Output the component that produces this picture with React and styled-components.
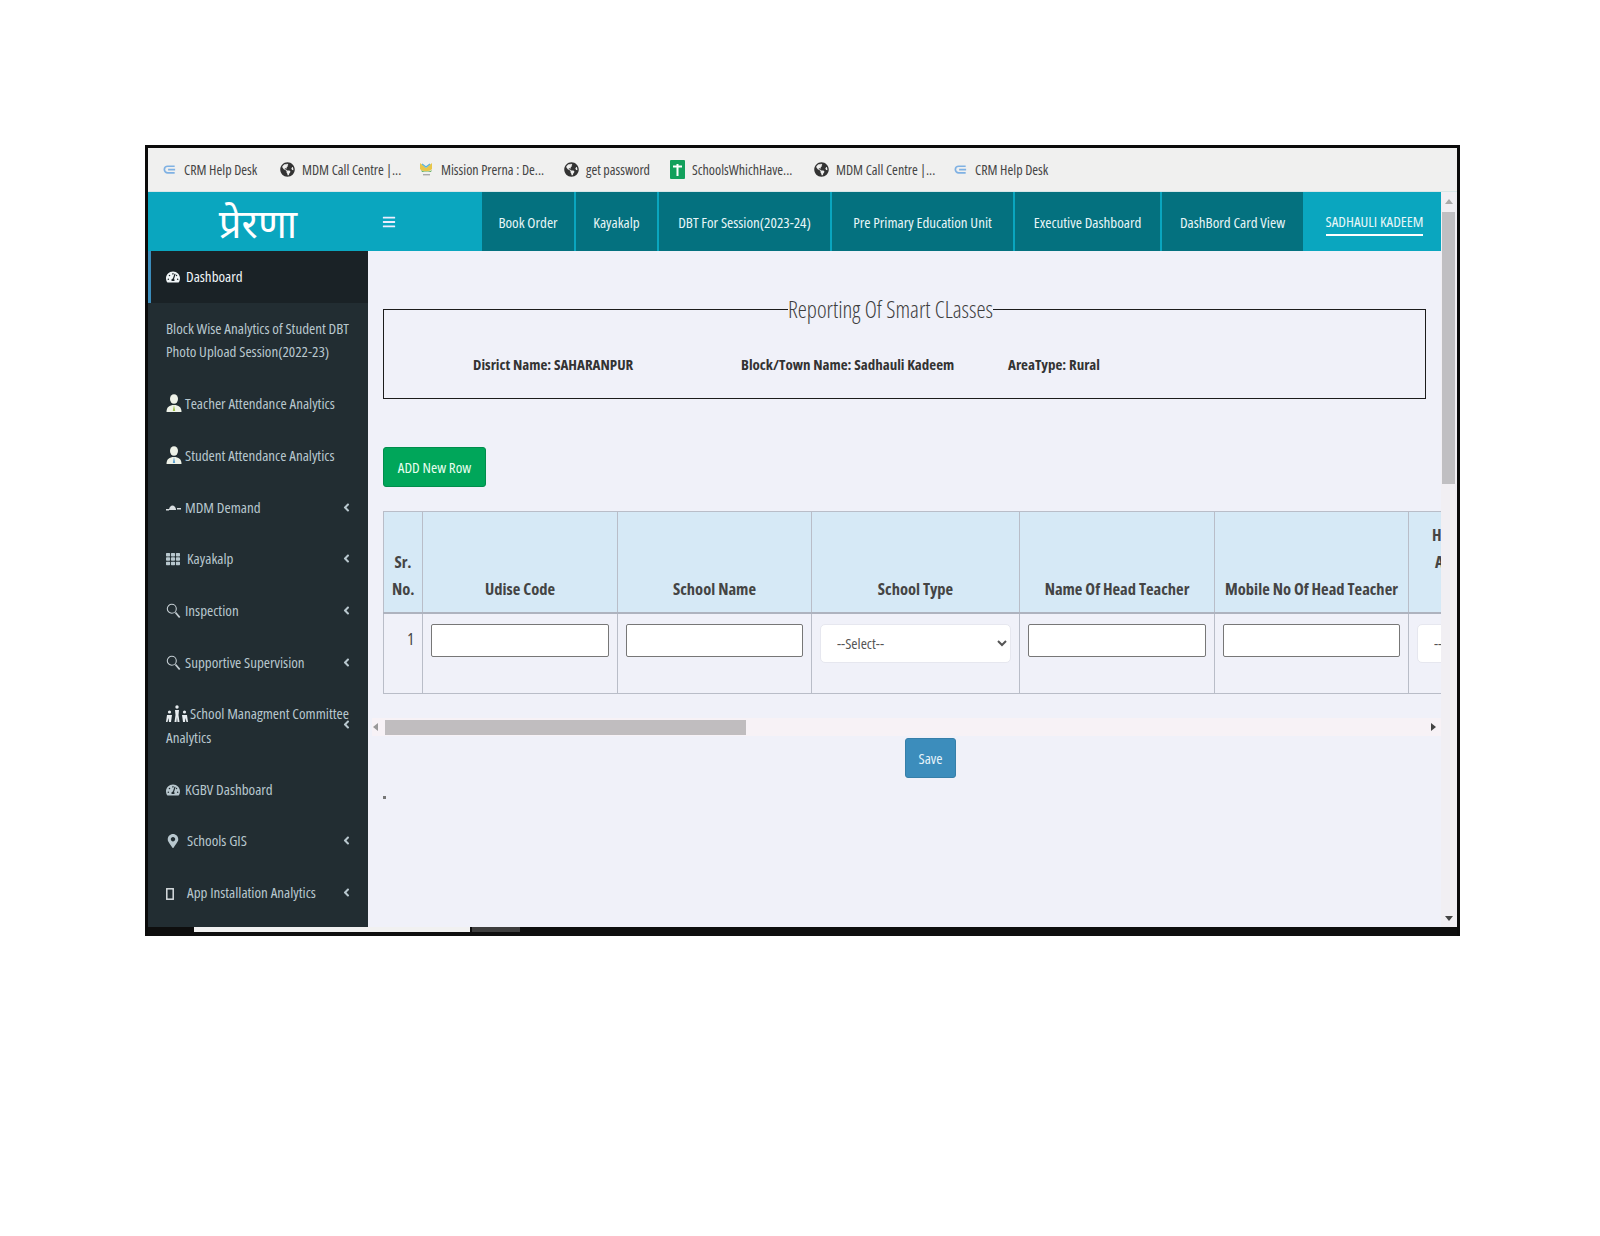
import React from "react";
import styled, { createGlobalStyle } from "styled-components";
import { FaAngleLeft, FaBars, FaGlobeAmericas, FaMapMarkerAlt, FaTachometerAlt, FaTh } from "react-icons/fa";

const Global = createGlobalStyle`
  html, body { margin: 0; padding: 0; background: #fff; }
  * { box-sizing: border-box; }
  body { font-family: "Open Sans", "Liberation Sans", sans-serif; font-stretch: 82%; }
  button, select, input { font-family: inherit; font-stretch: inherit; }
`;

const Frame = styled.div`
  margin: 145px 0 0 145px; width: 1315px; height: 791px; border: 3px solid #0b0b0b; border-bottom: 0;
  display: flex; flex-direction: column; overflow: hidden; background: #f0f1f9;
`;
const Bookmarks = styled.div`
  height: 44px; flex: none; display: flex; align-items: center; padding-left: 14px; gap: 16px;
  background: #f0f0ef; border-bottom: 1px solid #d8e6e8; font-size: 14px; font-stretch: 78%; color: #444;
`;
const Bookmark = styled.div`
  display: flex; align-items: center; gap: 7px; width: ${p => p.$w}px; white-space: nowrap; flex: none;
  svg { flex: none; }
`;
const Page = styled.div`flex: 1; min-height: 0; display: flex;`;
const App_ = styled.div`width: 1293px; flex: none; display: flex; flex-direction: column; min-height: 0;`;
const Header = styled.header`height: 59px; flex: none; display: flex; background: #0aa6bf; color: #fff;`;
const Logo = styled.div`
  width: 220px; flex: none; display: flex; align-items: center; justify-content: center; font-size: 40px;
  font-family: "Noto Sans", "Liberation Serif", serif; line-height: 1; color: #fff; padding-top: 2px;
`;
const Burger = styled.div`width: 114px; flex: none; display: flex; align-items: center; padding-left: 14px; font-size: 14px; color: #eef;`;
const Nav = styled.nav`flex: 1; display: flex; gap: 2px;`;
const NavItem = styled.a`
  width: ${p => p.$w}px; flex: none; display: flex; align-items: center; justify-content: center;
  background: ${p => (p.$active ? "#0aa6bf" : "#04717f")}; font-size: 15px; white-space: nowrap; color: #e8f6f8;
`;
const Under = styled.span`border-bottom: 2px solid #fff; padding: 2px 0 3px; margin-top: 2px;`;
const Body = styled.div`flex: 1; min-height: 0; display: flex;`;
const Side = styled.aside`width: 220px; flex: none; background: #222d32; color: #b8c7ce; overflow: hidden; font-size: 15px;`;
const Row = styled.div`
  position: relative; padding: 14px ${p => (p.$tight ? 4 : 18)}px 14px 18px; line-height: 23.7px; min-height: 51.7px;
  ${p => p.$active ? "background:#1a2226;border-left:3px solid #3c8dbc;padding-left:15px;color:#f0f5f7;" : ""}
`;
const Ico = styled.span`display: inline-flex; width: ${p => p.$w || 19}px; vertical-align: ${p => p.$v ?? -2}px; font-size: 14px;`;
const Chev = styled.span`position: absolute; right: 15px; top: ${p => p.$top || 19}px; font-size: 13px; line-height: 1; color: #b8c7ce;`;
const Main = styled.main`flex: 1; min-width: 0; overflow: hidden; padding-top: 47px; position: relative;`;
const Field = styled.fieldset`
  margin: 0 15px; padding: 0 0 0 89px; height: 101px; border: 1px solid #1c1c1c; min-width: 0; display: block;
`;
const Legend = styled.legend`
  margin-left: 315px; padding: 0; font-size: 23px; line-height: 1; color: #3d3d3d; font-weight: 300; font-stretch: 78%;
`;
const Info = styled.div`display: flex; margin-top: 33px; font-size: 15px; color: #333; font-weight: 700; font-stretch: 78%;`;
const InfoItem = styled.div`width: ${p => p.$w}px; flex: none; white-space: nowrap;`;
const AddBtn = styled.button`
  display: block; margin: 48px 0 24px 15px; width: 103px; height: 40px; border: 1px solid #008d4c; border-radius: 3px; background: #00a65a;
  color: #e8fff0; font-size: 15px; padding: 0;
`;
const TableWrap = styled.div`margin-left: 15px; overflow: hidden;`;
const Table = styled.table`border-collapse: collapse; table-layout: fixed; width: 1250px; border: 1px solid #b9bdc8; border-right: 0;`;
const Th = styled.th`
  width: ${p => p.$w}px; height: 101px; background: #d6e9f6; border: 1px solid #b9bdc8; border-bottom: 2px solid #aeb3bf;
  font-size: 16.5px; line-height: 27px; color: #444; vertical-align: bottom; padding: 0 8px 10px; text-align: center; font-stretch: 78%;
`;
const ThClip = styled.span`display: block; text-align: left; padding-left: ${p => p.$pad}px; height: 27px;`;
const Td = styled.td`height: 81px; border: 1px solid #b9bdc8; padding: 10px 8px 0; vertical-align: top; background: #f0f1f9;`;
const NumCell = styled(Td)`text-align: right; font-size: 16px; color: #444; padding-top: 14px;`;
const Inp = styled.input`
  display: block; width: 100%; height: 33px; border: 1px solid #777; border-radius: 2px; background: #fff; padding: 0;
`;
const Sel = styled.select`
  display: block; width: 100%; height: 39px; border: 1px solid #e6e7ef; border-radius: 5px; background: #fff; color: #555;
  font-size: 15px; padding-left: 12px;
`;
const HBar = styled.div`margin: 24px 0 0 4px; height: 18px; background: #f7f2f6; display: flex; align-items: center; position: relative; padding-left: 13px;`;
const HThumb = styled.div`width: 361px; height: 15px; background: #c0bdbf;`;
const HArrow = styled.span`
  position: absolute; top: 5px; ${p => p.$right ? "right: 5px; border-left: 5px solid #444;" : "left: 1px; border-right: 5px solid #999;"}
  border-top: 4px solid transparent; border-bottom: 4px solid transparent; width: 0; height: 0;
`;
const SaveRow = styled.div`padding: 2px 0 0 537px;`;
const SaveBtn = styled.button`
  width: 51px; height: 40px; background: #3c8dbc; border: 1px solid #367fa9; border-radius: 3px; color: #e6f3fa; font-size: 15px; padding: 0;
`;
const Speck = styled.div`width: 3px; height: 3px; margin: 18px 0 0 15px; background: #777;`;
const VBar = styled.div`flex: 1; background: #f1eff3; position: relative; padding-top: 20px;`;
const VThumb = styled.div`width: 13px; margin-left: 1px; height: 272px; background: #c0bfc2;`;
const VArrow = styled.span`
  position: absolute; left: 4px; ${p => p.$down ? "bottom: 6px; border-top: 5px solid #444;" : "top: 7px; border-bottom: 5px solid #aaa;"}
  border-left: 4px solid transparent; border-right: 4px solid transparent; width: 0; height: 0;
`;
const Bottom = styled.div`height: 9px; flex: none; background: #0e0e0e; display: flex; padding-left: 46px; align-items: flex-start;`;
const BottomWhite = styled.div`width: 276px; height: 5px; background: #f1f1f1;`;
const BottomGrey = styled.div`width: 48px; height: 5px; margin-left: 2px; background: #3e3e3e;`;

const CrmIcon = () => (
  <svg width="15" height="15" viewBox="0 0 16 16" fill="none" stroke="#7fb1e3" strokeWidth="1.8">
    <path d="M13.5 4.5H6a3.5 3.5 0 0 0 0 7h7.5M14 8.2H6.5" />
  </svg>
);
const PrernaIcon = () => (
  <svg width="15" height="18" viewBox="0 0 15 18">
    <path d="M1 2l6 5 6-5v6c-2 3-10 3-12 0z" fill="#e8c64a" />
    <path d="M3 3l4 3 4-3" stroke="#5db4d8" strokeWidth="1.4" fill="none" />
    <path d="M2 9c3 2 8 2 11 0l-1 2H3z" fill="#6bb36a" />
    <rect x="4" y="13" width="7" height="1.4" fill="#aaa" />
  </svg>
);
const SheetIcon = () => (
  <svg width="15" height="19" viewBox="0 0 15 19">
    <rect width="15" height="19" rx="1" fill="#12a05c" />
    <path d="M3 6.5h9M7.5 4v12" stroke="#fff" strokeWidth="2" />
  </svg>
);
const PersonIcon = ({ accent }) => (
  <svg width="16" height="19" viewBox="0 0 16 19">
    <ellipse cx="8" cy="5" rx="4" ry="4.8" fill="#eef2e8" />
    <path d="M0.5 18c0-5 3-7 7.5-7s7.5 2 7.5 7z" fill="#eef2e8" />
    <path d="M8 11l-1.2 6h2.4z" fill={accent} />
  </svg>
);
const DishIcon = () => (
  <svg width="16" height="8" viewBox="0 0 16 8" fill="#d8dde0">
    <path d="M3 6c0-3 2-4.500 3.500-4.500S10 3 10 6z" />
    <rect x="0" y="5" width="3" height="1.500" />
    <rect x="11" y="4" width="4" height="1.500" />
  </svg>
);
const LensIcon = () => (
  <svg width="15" height="16" viewBox="0 0 15 16" fill="none" stroke="#c4cdd2">
    <circle cx="5.800" cy="5.800" r="4.500" strokeWidth="1.100" />
    <path d="M9.500 9.500l4.200 5" strokeWidth="1.800" />
  </svg>
);
const FamilyIcon = () => (
  <svg width="22" height="18" viewBox="0 0 22 18" fill="#e8edf0">
    <circle cx="11" cy="2" r="1.700" /><path d="M9 5h4l-.5 5 1 7h-2l-.5-5-.5 5h-2l1-7z" />
    <circle cx="3.500" cy="7" r="1.600" /><path d="M1 10h5l-1 7H3l-.5-4-1 4H0z" />
    <circle cx="18.500" cy="7" r="1.600" /><path d="M16 10h5l1 7h-1.500l-1-4-.5 4h-2z" />
  </svg>
);
const PhoneIcon = () => (
  <svg width="8" height="12" viewBox="0 0 8 12" fill="none" stroke="#d8dde0" strokeWidth="1.500"><rect x=".8" y=".8" width="6.400" height="10.400" /></svg>
);

const navItems = [
  ["Book Order", 92], ["Kayakalp", 81], ["DBT For Session(2023-24)", 171], ["Pre Primary Education Unit", 181],
  ["Executive Dashboard", 145], ["DashBord Card View", 141],
];
const Chevron = ({ top }) => <Chev $top={top}><FaAngleLeft /></Chev>;

export default function App() {
  return (
    <>
      <Global />
      <Frame>
        <Bookmarks>
          <Bookmark $w={102}><CrmIcon />CRM Help Desk</Bookmark>
          <Bookmark $w={123}><FaGlobeAmericas size={15} color="#333" />MDM Call Centre |...</Bookmark>
          <Bookmark $w={129}><PrernaIcon />Mission Prerna : De...</Bookmark>
          <Bookmark $w={90}><FaGlobeAmericas size={15} color="#333" />get password</Bookmark>
          <Bookmark $w={128}><SheetIcon />SchoolsWhichHave...</Bookmark>
          <Bookmark $w={123}><FaGlobeAmericas size={15} color="#333" />MDM Call Centre |...</Bookmark>
          <Bookmark $w={102}><CrmIcon />CRM Help Desk</Bookmark>
        </Bookmarks>
        <Page>
          <App_>
            <Header>
              <Logo>प्रेरणा</Logo>
              <Burger><FaBars /></Burger>
              <Nav>
                {navItems.map(([t, w]) => <NavItem key={t} $w={w}>{t}</NavItem>)}
                <NavItem $w={139} $active><Under>SADHAULI KADEEM</Under></NavItem>
              </Nav>
            </Header>
            <Body>
              <Side>
                <Row $active><Ico $w={20}><FaTachometerAlt /></Ico>Dashboard</Row>
                <Row>Block Wise Analytics of Student DBT Photo Upload Session(2022-23)</Row>
                <Row><Ico $v={-4}><PersonIcon accent="#9fc04a" /></Ico>Teacher Attendance Analytics</Row>
                <Row><Ico $v={-4}><PersonIcon accent="#5aa0d0" /></Ico>Student Attendance Analytics</Row>
                <Row><Ico $v={1}><DishIcon /></Ico>MDM Demand<Chevron /></Row>
                <Row><Ico $w={21}><FaTh /></Ico>Kayakalp<Chevron /></Row>
                <Row><Ico $v={-3}><LensIcon /></Ico>Inspection<Chevron /></Row>
                <Row><Ico $v={-3}><LensIcon /></Ico>Supportive Supervision<Chevron /></Row>
                <Row $tight><Ico $w={24} $v={-4}><FamilyIcon /></Ico>School Managment Committee Analytics<Chevron top={30} /></Row>
                <Row><Ico><FaTachometerAlt /></Ico>KGBV Dashboard</Row>
                <Row><Ico $w={21}><FaMapMarkerAlt /></Ico>Schools GIS<Chevron /></Row>
                <Row><Ico $w={21}><PhoneIcon /></Ico>App Installation Analytics<Chevron /></Row>
              </Side>
              <Main>
                <Field>
                  <Legend>Reporting Of Smart CLasses</Legend>
                  <Info>
                    <InfoItem $w={268}>Disrict Name: SAHARANPUR</InfoItem>
                    <InfoItem $w={267}>Block/Town Name: Sadhauli Kadeem</InfoItem>
                    <InfoItem $w={120}>AreaType: Rural</InfoItem>
                  </Info>
                </Field>
                <AddBtn>ADD New Row</AddBtn>
                <TableWrap>
                  <Table>
                    <thead>
                      <tr>
                        <Th $w={39}>Sr. No.</Th>
                        <Th $w={195}>Udise Code</Th>
                        <Th $w={194}>School Name</Th>
                        <Th $w={208}>School Type</Th>
                        <Th $w={195}>Name Of Head Teacher</Th>
                        <Th $w={194}>Mobile No Of Head Teacher</Th>
                        <Th $w={225}><ThClip $pad={15}>H</ThClip><ThClip $pad={18}>A</ThClip><ThClip $pad={0} /></Th>
                      </tr>
                    </thead>
                    <tbody>
                      <tr>
                        <NumCell>1</NumCell>
                        <Td><Inp /></Td>
                        <Td><Inp /></Td>
                        <Td><Sel><option>--Select--</option></Sel></Td>
                        <Td><Inp /></Td>
                        <Td><Inp /></Td>
                        <Td><Sel><option>--Select--</option></Sel></Td>
                      </tr>
                    </tbody>
                  </Table>
                </TableWrap>
                <HBar><HArrow /><HThumb /><HArrow $right /></HBar>
                <SaveRow><SaveBtn>Save</SaveBtn></SaveRow>
                <Speck />
              </Main>
            </Body>
          </App_>
          <VBar><VArrow /><VThumb /><VArrow $down /></VBar>
        </Page>
        <Bottom><BottomWhite /><BottomGrey /></Bottom>
      </Frame>
    </>
  );
}
